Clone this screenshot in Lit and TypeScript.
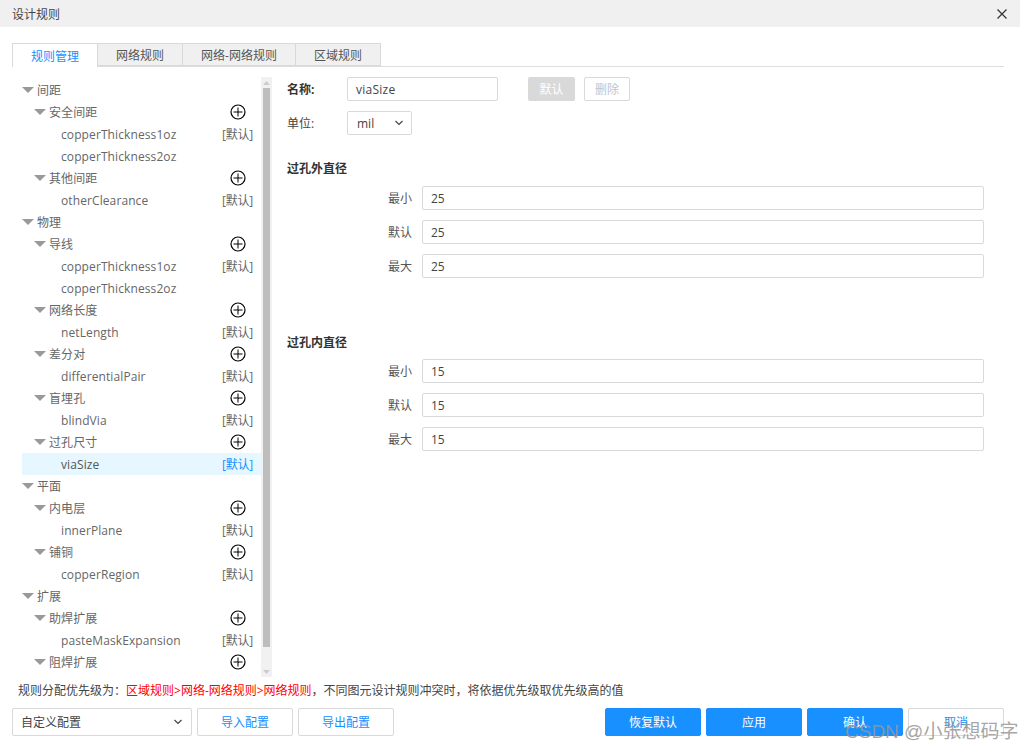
import { LitElement, html, css, svg } from "lit";
import { customElement } from "lit/decorators.js";

type Row = { t: string; l: number; plus?: boolean; def?: boolean; sel?: boolean };
const rows: Row[] = [
  { t: "间距", l: 0 },
  { t: "安全间距", l: 1, plus: true },
  { t: "copperThickness1oz", l: 2, def: true },
  { t: "copperThickness2oz", l: 2 },
  { t: "其他间距", l: 1, plus: true },
  { t: "otherClearance", l: 2, def: true },
  { t: "物理", l: 0 },
  { t: "导线", l: 1, plus: true },
  { t: "copperThickness1oz", l: 2, def: true },
  { t: "copperThickness2oz", l: 2 },
  { t: "网络长度", l: 1, plus: true },
  { t: "netLength", l: 2, def: true },
  { t: "差分对", l: 1, plus: true },
  { t: "differentialPair", l: 2, def: true },
  { t: "盲埋孔", l: 1, plus: true },
  { t: "blindVia", l: 2, def: true },
  { t: "过孔尺寸", l: 1, plus: true },
  { t: "viaSize", l: 2, def: true, sel: true },
  { t: "平面", l: 0 },
  { t: "内电层", l: 1, plus: true },
  { t: "innerPlane", l: 2, def: true },
  { t: "铺铜", l: 1, plus: true },
  { t: "copperRegion", l: 2, def: true },
  { t: "扩展", l: 0 },
  { t: "助焊扩展", l: 1, plus: true },
  { t: "pasteMaskExpansion", l: 2, def: true },
  { t: "阻焊扩展", l: 1, plus: true },
];

const chevron = svg`<svg class="chev" width="10" height="6" viewBox="0 0 10 6"><path d="M1.5 1l3.5 3.5L8.500 1" fill="none" stroke="#444" stroke-width="1.200"/></svg>`;

@customElement("app-root")
export class AppRoot extends LitElement {
  static styles = css`
    :host {
      display: flex;
      flex-direction: column;
      position: relative;
      width: 1020px;
      height: 751px;
      overflow: hidden;
      background: #fff;
      font-family: "Open Sans", "Noto Sans CJK SC", sans-serif;
      font-size: 12px;
      color: #555;
    }
    .title {
      height: 27px;
      flex: none;
      background: #f0f0f0;
      display: flex;
      align-items: center;
      justify-content: space-between;
      padding: 0 13px 0 12px;
      color: #444;
    }
    .title svg { display: block; }
    .tabs {
      flex: none;
      margin: 16px 16px 0 12px;
      height: 24px;
      display: flex;
      border-bottom: 1px solid #ddd;
      box-sizing: border-box;
    }
    .tab {
      box-sizing: border-box;
      height: 23px;
      background: #f0f0f0;
      border: 1px solid #d9d9d9;
      border-left: 0;
      display: flex;
      align-items: center;
      justify-content: center;
      color: #555;
    }
    .tab.active {
      height: 24px;
      background: #fff;
      color: #1890ff;
      border-left: 1px solid #d9d9d9;
      border-bottom: 0;
    }
    .main {
      flex: none;
      height: 600px;
      margin-top: 10px;
      display: flex;
    }
    .tree-wrap {
      flex: none;
      width: 250px;
      margin-left: 22px;
      display: flex;
    }
    .tree { flex: 1; padding-top: 2px; min-width: 0; }
    .row {
      box-sizing: border-box;
      height: 22px;
      display: flex;
      align-items: center;
      padding-right: 8px;
      white-space: nowrap;
      color: #666;
      letter-spacing: 0.1px;
    }
    .row.sel { background: #e6f7ff; color: #555; }
    .tri {
      flex: none;
      width: 0;
      height: 0;
      border-left: 6px solid transparent;
      border-right: 6px solid transparent;
      border-top: 6px solid #999;
      margin-right: 3px;
    }
    .row .name { flex: 1; }
    .plus { flex: none; margin-right: 7px; display: block; }
    .def { flex: none; color: #666; letter-spacing: -0.2px; }
    .sel .def { color: #1890ff; }
    .scroll {
      flex: none;
      width: 11px;
      background: #f1f1f1;
      display: flex;
      flex-direction: column;
      align-items: center;
    }
    .arrow {
      flex: none;
      height: 11px;
      display: flex;
      align-items: center;
      justify-content: center;
    }
    .thumb {
      flex: none;
      width: 7px;
      height: 559px;
      background: #bdbdbd;
    }
    .spacer { flex: 1; }
    .form { flex: 1; padding-left: 15px; min-width: 0; padding-right: 36px; }
    .line { display: flex; align-items: center; height: 24px; }
    .line + .line { margin-top: 10px; }
    .lbl { flex: none; width: 60px; color: #444; }
    .lbl.strong, .sec { font-weight: 700; color: #333; }
    .input {
      box-sizing: border-box;
      height: 24px;
      border: 1px solid #d9d9d9;
      border-radius: 2px;
      padding: 0 8px;
      display: flex;
      align-items: center;
      justify-content: space-between;
      color: #444;
      background: #fff;
    }
    .name-in { width: 151px; letter-spacing: 0.25px; }
    .unit { width: 65px; padding-right: 7px; padding-left: 9px; }
    .btn-sm {
      box-sizing: border-box;
      height: 24px;
      display: flex;
      align-items: center;
      justify-content: center;
      border-radius: 2px;
    }
    .b1 { width: 47px; margin-left: 30px; background: #d9d9d9; color: #fff; }
    .b2 { width: 46px; margin-left: 9px; border: 1px solid #d9d9d9; color: #c0c4cc; }
    .sec { height: 17px; line-height: 17px; }
    .first { margin-top: 25px; }
    .second { margin-top: 56px; }
    .grp { display: flex; flex-direction: column; gap: 10px; margin-top: 9px; }
    .second + .grp { margin-top: 8px; }
    .frow { display: flex; align-items: center; height: 24px; }
    .frow .k { flex: none; width: 135px; text-align: right; padding-right: 10px; box-sizing: border-box; color: #555; }
    .frow .input { flex: 1; }
    .note { flex: none; margin: 6px 0 0 18px; height: 16px; line-height: 16px; color: #444; white-space: nowrap; }
    .note b { font-weight: 400; color: #ff0000; }
    .foot {
      flex: none;
      margin: 9px 16px 0 12px;
      height: 28px;
      display: flex;
      gap: 5px;
    }
    .btn {
      box-sizing: border-box;
      width: 96px;
      height: 28px;
      border: 1px solid #d9d9d9;
      border-radius: 2px;
      display: flex;
      align-items: center;
      justify-content: center;
      color: #1890ff;
      background: #fff;
    }
    .btn.p { background: #1890ff; border-color: #1890ff; color: #fff; }
    .cfg {
      box-sizing: border-box;
      width: 180px;
      height: 28px;
      border: 1px solid #d9d9d9;
      border-radius: 2px;
      padding: 0 8px;
      display: flex;
      align-items: center;
      justify-content: space-between;
      color: #444;
    }
    .gap { flex: 1; }
    .wm {
      position: absolute;
      left: 845px;
      top: 720px;
      font-size: 19px;
      line-height: 24px;
      color: rgba(150, 150, 150, 0.85);
      white-space: nowrap;
      font-family: "Liberation Sans", "Noto Sans CJK SC", sans-serif;
    }
  `;

  private field(k: string, v: string) {
    return html`<div class="frow"><span class="k">${k}</span><div class="input">${v}</div></div>`;
  }

  private row(r: Row) {
    const pad = r.l === 0 ? 0 : r.l === 1 ? 12 : 39;
    return html`<div class="row ${r.sel ? "sel" : ""}" style="padding-left:${pad}px">
      ${r.l < 2 ? html`<span class="tri"></span>` : ""}
      <span class="name">${r.t}</span>
      ${r.plus
        ? html`<svg class="plus" width="16" height="16" viewBox="0 0 16 16"><circle cx="8" cy="8" r="7" fill="none" stroke="#000" stroke-width="1.200"/><path d="M3.500 8h9M8 3.500v9" stroke="#000" stroke-width="1"/></svg>`
        : ""}
      ${r.def ? html`<span class="def">[默认]</span>` : ""}
    </div>`;
  }

  render() {
    return html`
      <div class="title">
        <span>设计规则</span>
        <svg width="10" height="10" viewBox="0 0 10 10"><path d="M.5.5l9 9M9.500.5l-9 9" stroke="#333" stroke-width="1.200"/></svg>
      </div>
      <div class="tabs">
        <div class="tab active" style="width:86px">规则管理</div>
        <div class="tab" style="width:85px">网络规则</div>
        <div class="tab" style="width:113px">网络-网络规则</div>
        <div class="tab" style="width:85px">区域规则</div>
      </div>
      <div class="main">
        <div class="tree-wrap">
          <div class="tree">${rows.map((r) => this.row(r))}</div>
          <div class="scroll">
            <div class="arrow"><svg width="7" height="4" viewBox="0 0 7 4"><path d="M3.500 0L7 4H0z" fill="#ccc"/></svg></div>
            <div class="thumb"></div>
            <div class="spacer"></div>
            <div class="arrow"><svg width="7" height="4" viewBox="0 0 7 4"><path d="M3.500 4L7 0H0z" fill="#ccc"/></svg></div>
          </div>
        </div>
        <div class="form">
          <div class="line">
            <span class="lbl strong">名称:</span>
            <div class="input name-in">viaSize</div>
            <div class="btn-sm b1">默认</div>
            <div class="btn-sm b2">删除</div>
          </div>
          <div class="line">
            <span class="lbl">单位:</span>
            <div class="input unit">mil ${chevron}</div>
          </div>
          <div class="sec first">过孔外直径</div>
          <div class="grp">${this.field("最小", "25")}${this.field("默认", "25")}${this.field("最大", "25")}</div>
          <div class="sec second">过孔内直径</div>
          <div class="grp">${this.field("最小", "15")}${this.field("默认", "15")}${this.field("最大", "15")}</div>
        </div>
      </div>
      <div class="note">规则分配优先级为：<b>区域规则&gt;网络-网络规则&gt;网络规则</b>，不同图元设计规则冲突时，将依据优先级取优先级高的值</div>
      <div class="foot">
        <div class="cfg">自定义配置 ${chevron}</div>
        <div class="btn">导入配置</div>
        <div class="btn">导出配置</div>
        <div class="gap"></div>
        <div class="btn p">恢复默认</div>
        <div class="btn p">应用</div>
        <div class="btn p">确认</div>
        <div class="btn">取消</div>
      </div>
      <div class="wm">CSDN @小张想码字</div>
    `;
  }
}
